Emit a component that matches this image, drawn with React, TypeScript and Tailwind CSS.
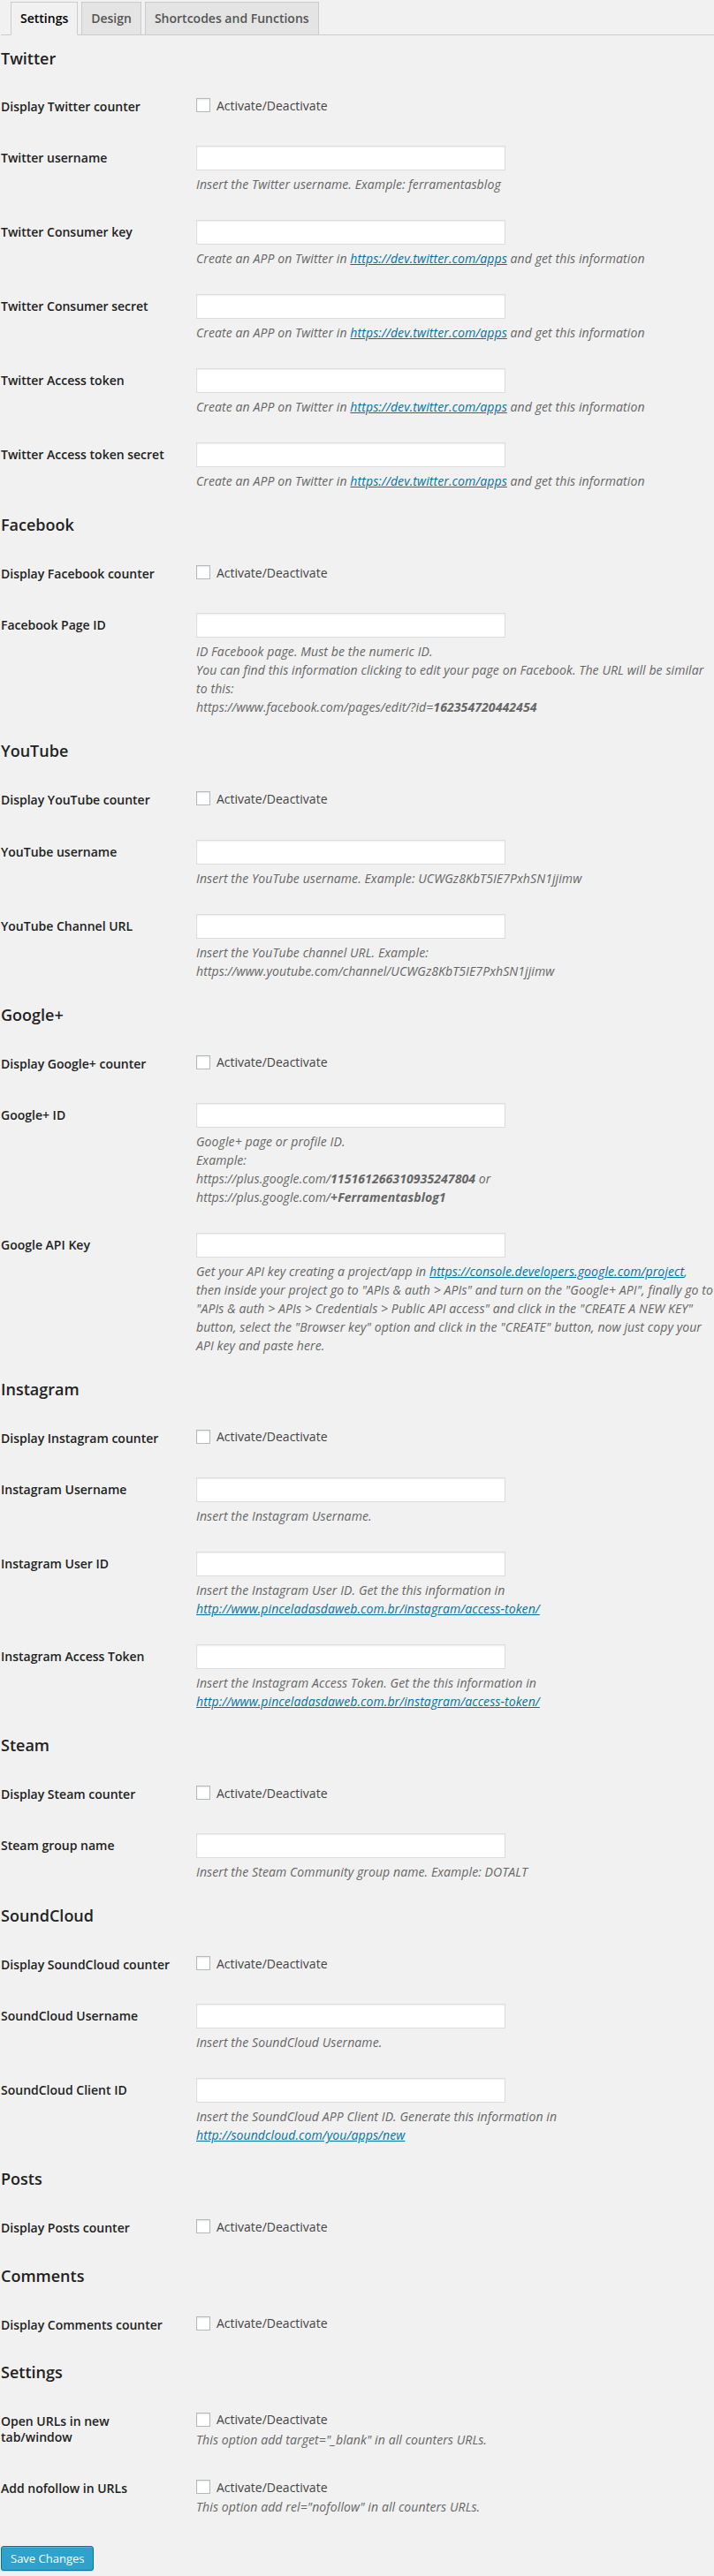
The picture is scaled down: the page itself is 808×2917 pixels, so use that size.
import React from "react";

type Field = {
  label: string;
  type: "check" | "text";
  desc?: React.ReactNode;
};

type Section = {
  title: string;
  fields: Field[];
};

const Link = ({ href }: { href: string }) => (
  <a href={href} className="text-[#0074a2] underline">
    {href}
  </a>
);

const twitterApp = (
  <>
    Create an APP on Twitter in <Link href="https://dev.twitter.com/apps" /> and get this
    information
  </>
);

const sections: Section[] = [
  {
    title: "Twitter",
    fields: [
      { label: "Display Twitter counter", type: "check" },
      {
        label: "Twitter username",
        type: "text",
        desc: "Insert the Twitter username. Example: ferramentasblog",
      },
      { label: "Twitter Consumer key", type: "text", desc: twitterApp },
      { label: "Twitter Consumer secret", type: "text", desc: twitterApp },
      { label: "Twitter Access token", type: "text", desc: twitterApp },
      { label: "Twitter Access token secret", type: "text", desc: twitterApp },
    ],
  },
  {
    title: "Facebook",
    fields: [
      { label: "Display Facebook counter", type: "check" },
      {
        label: "Facebook Page ID",
        type: "text",
        desc: (
          <>
            ID Facebook page. Must be the numeric ID.
            <br />
            You can find this information clicking to edit your page on Facebook. The URL will
            be similar
            <br />
            to this:
            <br />
            https://www.facebook.com/pages/edit/?id=<b className="font-bold">162354720442454</b>
          </>
        ),
      },
    ],
  },
  {
    title: "YouTube",
    fields: [
      { label: "Display YouTube counter", type: "check" },
      {
        label: "YouTube username",
        type: "text",
        desc: "Insert the YouTube username. Example: UCWGz8KbT5IE7PxhSN1jjimw",
      },
      {
        label: "YouTube Channel URL",
        type: "text",
        desc: (
          <>
            Insert the YouTube channel URL. Example:
            <br />
            https://www.youtube.com/channel/UCWGz8KbT5IE7PxhSN1jjimw
          </>
        ),
      },
    ],
  },
  {
    title: "Google+",
    fields: [
      { label: "Display Google+ counter", type: "check" },
      {
        label: "Google+ ID",
        type: "text",
        desc: (
          <>
            Google+ page or profile ID.
            <br />
            Example:
            <br />
            https://plus.google.com/<b className="font-bold">115161266310935247804</b> or
            <br />
            https://plus.google.com/<b className="font-bold">+Ferramentasblog1</b>
          </>
        ),
      },
      {
        label: "Google API Key",
        type: "text",
        desc: (
          <>
            Get your API key creating a project/app in{" "}
            <Link href="https://console.developers.google.com/project" />,
            <br />
            then inside your project go to "APIs &amp; auth &gt; APIs" and turn on the "Google+
            API", finally go to
            <br />
            "APIs &amp; auth &gt; APIs &gt; Credentials &gt; Public API access" and click in the
            "CREATE A NEW KEY"
            <br />
            button, select the "Browser key" option and click in the "CREATE" button, now just
            copy your
            <br />
            API key and paste here.
          </>
        ),
      },
    ],
  },
  {
    title: "Instagram",
    fields: [
      { label: "Display Instagram counter", type: "check" },
      { label: "Instagram Username", type: "text", desc: "Insert the Instagram Username." },
      {
        label: "Instagram User ID",
        type: "text",
        desc: (
          <>
            Insert the Instagram User ID. Get the this information in
            <br />
            <Link href="http://www.pinceladasdaweb.com.br/instagram/access-token/" />
          </>
        ),
      },
      {
        label: "Instagram Access Token",
        type: "text",
        desc: (
          <>
            Insert the Instagram Access Token. Get the this information in
            <br />
            <Link href="http://www.pinceladasdaweb.com.br/instagram/access-token/" />
          </>
        ),
      },
    ],
  },
  {
    title: "Steam",
    fields: [
      { label: "Display Steam counter", type: "check" },
      {
        label: "Steam group name",
        type: "text",
        desc: "Insert the Steam Community group name. Example: DOTALT",
      },
    ],
  },
  {
    title: "SoundCloud",
    fields: [
      { label: "Display SoundCloud counter", type: "check" },
      { label: "SoundCloud Username", type: "text", desc: "Insert the SoundCloud Username." },
      {
        label: "SoundCloud Client ID",
        type: "text",
        desc: (
          <>
            Insert the SoundCloud APP Client ID. Generate this information in
            <br />
            <Link href="http://soundcloud.com/you/apps/new" />
          </>
        ),
      },
    ],
  },
  { title: "Posts", fields: [{ label: "Display Posts counter", type: "check" }] },
  { title: "Comments", fields: [{ label: "Display Comments counter", type: "check" }] },
  {
    title: "Settings",
    fields: [
      {
        label: "Open URLs in new tab/window",
        type: "check",
        desc: 'This option add target="_blank" in all counters URLs.',
      },
      {
        label: "Add nofollow in URLs",
        type: "check",
        desc: 'This option add rel="nofollow" in all counters URLs.',
      },
    ],
  },
];

const Row = ({ field }: { field: Field }) => (
  <div className="flex">
    <div className="w-[211px] shrink-0 py-[20px] pr-[10px] text-[14px] font-semibold leading-[18.2px] text-[#222]">
      {field.label}
    </div>
    <div className="min-w-0 flex-1 py-[15px] pl-[10px]">
      {field.type === "check" ? (
        <label className="flex h-[24px] items-center gap-[7px] text-[14px] text-[#444]">
          <input
            type="checkbox"
            className="h-4 w-4 appearance-none border border-[#b4b9be] bg-white shadow-[inset_0_1px_2px_rgba(0,0,0,0.1)]"
          />
          Activate/Deactivate
        </label>
      ) : (
        <input
          type="text"
          className="block h-[28px] w-[350px] border border-[#ddd] bg-white px-[6px] shadow-[inset_0_1px_2px_rgba(0,0,0,0.07)] outline-none"
        />
      )}
      {field.desc && (
        <p
          className={`whitespace-nowrap text-[14px] italic leading-[21px] tracking-[0.1px] text-[#666] ${
            field.type === "text" ? "mt-[5px]" : "mt-0"
          }`}
        >
          {field.desc}
        </p>
      )}
    </div>
  </div>
);

const tabs = ["Settings", "Design", "Shortcodes and Functions"];

export default function App() {
  return (
    <div className="min-h-screen overflow-x-hidden bg-[#f1f1f1] pl-[1px] font-['Open_Sans',sans-serif] text-[#444]">
      <div className="flex gap-[4px] border-b border-[#ccc] pl-[11px] pt-[2px]">
        {tabs.map((tab, i) => (
          <div
            key={tab}
            className={`-mb-px flex h-[38px] items-center border px-[10px] pb-[1px] text-[14px] font-semibold ${
              i === 0
                ? "border-[#ccc] border-b-[#f1f1f1] bg-[#f1f1f1] text-black"
                : "border-[#ccc] bg-[#e4e4e4] text-[#555]"
            }`}
          >
            {tab}
          </div>
        ))}
      </div>

      {sections.map((section, i) => (
        <div key={section.title}>
          <h3
            className={`text-[18px] font-semibold leading-[24px] text-[#222] ${
              i === 0 ? "mt-[14px] mb-[14px]" : "mt-[12px] mb-[15px]"
            }`}
          >
            {section.title}
          </h3>
          {section.fields.map((field) => (
            <Row key={field.label} field={field} />
          ))}
        </div>
      ))}

      <div className="mt-[19px]">
        <button className="h-[28px] rounded-[3px] border border-[#0074a2] bg-[#2ea2cc] px-[10px] pb-[1px] text-[13px] leading-[26px] text-white shadow-[inset_0_1px_0_rgba(120,200,230,0.5),0_1px_0_rgba(0,0,0,0.15)]">
          Save Changes
        </button>
      </div>
    </div>
  );
}
